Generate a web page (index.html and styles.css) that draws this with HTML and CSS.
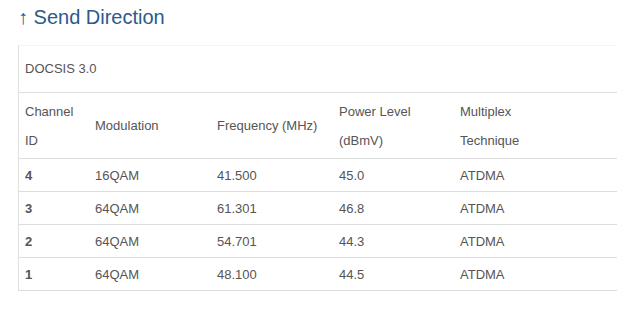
FILE: index.html
```html
<!DOCTYPE html>
<html>
<head>
<meta charset="utf-8">
<link rel="stylesheet" href="styles.css">
</head>
<body>
<h2 class="title">↑ Send Direction</h2>
<div class="panel">
  <div class="panel-heading">DOCSIS 3.0</div>
  <table class="grid">
    <thead>
      <tr>
        <th class="c1">Channel<br>ID</th>
        <th class="c2">Modulation</th>
        <th class="c3">Frequency (MHz)</th>
        <th class="c4">Power Level<br>(dBmV)</th>
        <th>Multiplex<br>Technique</th>
      </tr>
    </thead>
    <tbody>
      <tr><td class="id">4</td><td>16QAM</td><td>41.500</td><td>45.0</td><td>ATDMA</td></tr>
      <tr><td class="id">3</td><td>64QAM</td><td>61.301</td><td>46.8</td><td>ATDMA</td></tr>
      <tr><td class="id">2</td><td>64QAM</td><td>54.701</td><td>44.3</td><td>ATDMA</td></tr>
      <tr><td class="id">1</td><td>64QAM</td><td>48.100</td><td>44.5</td><td>ATDMA</td></tr>
    </tbody>
  </table>
</div>
</body>
</html>
```
FILE: styles.css
```css
html, body {
  margin: 0;
  padding: 0;
  background: #fff;
}
body {
  font-family: "Liberation Sans", Arial, sans-serif;
  font-size: 13px;
  color: #555;
  padding-left: 18px;
}
.title {
  margin: 6px 0 0 0;
  font-size: 20px;
  font-weight: normal;
  line-height: 22px;
  color: #2b5a8c;
}
.panel {
  margin-top: 17px;
  border-top: 1px solid #f3f3f3;
  border-left: 1px solid #e0e0e0;
  border-bottom: 1px solid #ddd;
}
.panel-heading {
  height: 46px;
  line-height: 46px;
  padding-left: 6px;
  border-bottom: 1px solid #ddd;
}
.grid {
  border-collapse: collapse;
  width: 100%;
  table-layout: fixed;
}
.grid th, .grid td {
  text-align: left;
  padding: 0 6px;
  vertical-align: middle;
}
.grid th {
  font-weight: normal;
  line-height: 29px;
  height: 65px;
}
.grid td {
  height: 32px;
  line-height: 17px;
  border-top: 1px solid #ddd;
}
.grid .id {
  font-weight: bold;
}
.c1 { width: 58px; }
.c2 { width: 110px; }
.c3 { width: 110px; }
.c4 { width: 109px; }
```
